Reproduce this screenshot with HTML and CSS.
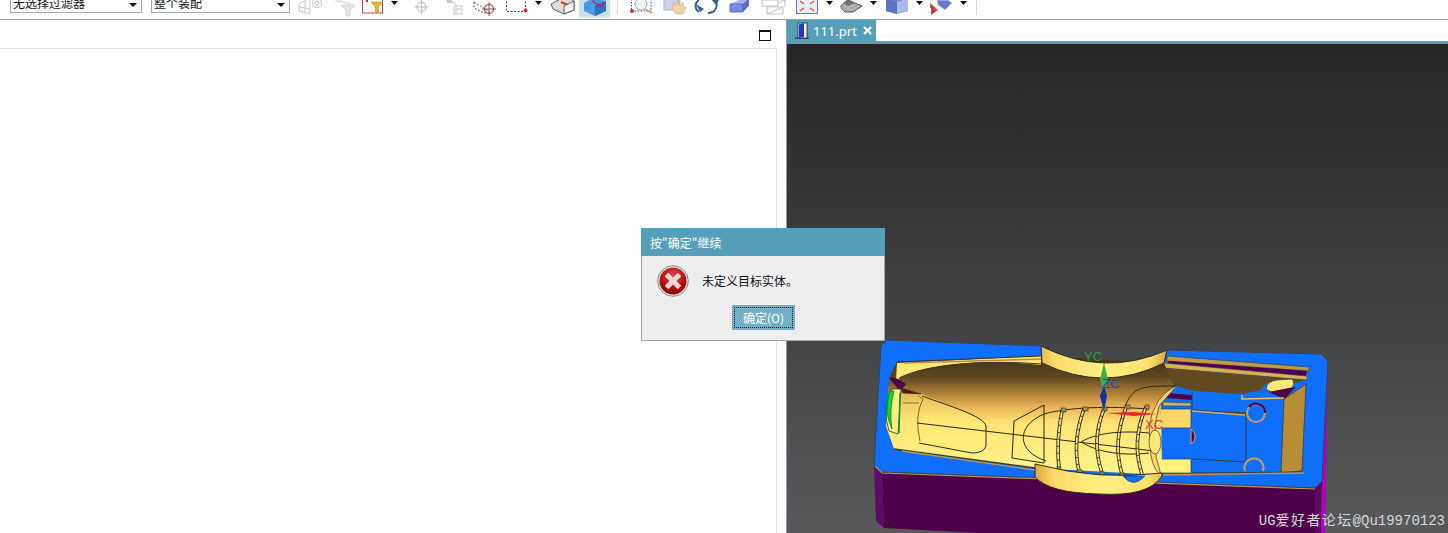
FILE: index.html
```html
<!DOCTYPE html>
<html lang="zh">
<head>
<meta charset="utf-8">
<title>UG</title>
<link rel="stylesheet" href="styles.css">
</head>
<body>
<div class="app">
  <header class="toolbar">
    <div class="combo combo-a"><span>无选择过滤器</span><i class="caret"></i></div>
    <div class="combo combo-b"><span>整个装配</span><i class="caret"></i></div>
    <svg width="38" height="19" viewBox="290 0 38 19"><g fill="none" stroke="#d2d2d2" stroke-width="1.300"><path d="M299,4 L310,-2 V14 L299,11 Z M299,7 L310,9 M305,0 V13"/><circle cx="317" cy="3" r="4.500"/><circle cx="317" cy="3" r="2"/></g></svg>
    <svg width="32" height="19" viewBox="328 0 32 19"><path d="M335,0 L351,4" stroke="#e2e2e2" stroke-width="2"/><path d="M341,5 H355 L350,10 V16 H346 V10 Z" fill="#e6e6e6" stroke="#d4d4d4"/></svg>
    <svg width="26" height="19" viewBox="360 0 26 19"><rect x="362.500" y="-3" width="20" height="16" fill="none" stroke="#c8404c"/><path d="M371,2 H383 L378.500,7 V12 H375.500 V7 Z" fill="#f0b030" stroke="#b8902c" stroke-width=".6"/><path d="M367,-1 V2" stroke="#d02020" stroke-width="2"/></svg>
    <svg width="18" height="19" viewBox="386 0 18 19"><path d="M391,1 H398 L394.500,5 Z" fill="#111"/></svg>
    <svg width="34" height="19" viewBox="404 0 34 19"><g fill="none" stroke="#c0c0c0" stroke-width="1.200"><circle cx="421.500" cy="7" r="4.500"/><path d="M421.500,0 V14 M414.500,7 H428.500"/></g></svg>
    <svg width="30" height="19" viewBox="438 0 30 19"><g fill="none" stroke="#d4d4d4" stroke-width="1.300"><path d="M450,0 L456,5 V14 M456,9 H461"/><rect x="454" y="6" width="8" height="8"/></g><rect x="447" y="-1" width="5" height="4" fill="#c8c8c8"/></svg>
    <svg width="32" height="19" viewBox="468 0 32 19"><path d="M474,2 L490,12 M474,2 V8 L484,13 H490" fill="none" stroke="#555" stroke-dasharray="2 1.500"/><circle cx="489" cy="9" r="4.500" fill="none" stroke="#e2202c" stroke-width="1.200"/><path d="M489,2 V16 M482,9 H496" stroke="#555" stroke-width=".9"/></svg>
    <svg width="30" height="19" viewBox="500 0 30 19"><path d="M506.500,-2 V11.500 H525" fill="none" stroke="#444" stroke-dasharray="2 1.500"/><path d="M525.500,-2 V9" stroke="#444" stroke-dasharray="2 1.500"/><circle cx="525.500" cy="10.500" r="2" fill="#d82c2c"/></svg>
    <svg width="16" height="19" viewBox="530 0 16 19"><path d="M535,1 H542 L538.500,5 Z" fill="#111"/></svg>
    <svg width="31" height="19" viewBox="546 0 31 19"><path d="M551,4 L566,-4 L574,1 V10 L564,14 L553,9 Z" fill="#dcdcdc" stroke="#606060"/><path d="M561,2 L568,5" stroke="#e03030" stroke-width="2.200"/><path d="M564,14 V6 L574,1 V10 Z" fill="#f4f4f4" stroke="#606060"/></svg>
    <svg width="35" height="19" viewBox="577 0 35 19"><rect x="579" y="-1" width="31" height="18.500" fill="#c8e3ea"/><path d="M584,3 L595,-3 L606,1 V11 L595,16 L584,11 Z" fill="#4a9ae4"/><path d="M595,5 V16 L606,11 V1 Z" fill="#2f6fc4"/><path d="M592,1 L601,6 L605,3" fill="none" stroke="#e02030" stroke-width="1.200"/></svg>
    <svg width="10" height="19" viewBox="612 0 10 19"><path d="M617.500,0 V15" stroke="#d4d4d4"/></svg>
    <svg width="36" height="19" viewBox="622 0 36 19"><path d="M631.500,-1 V11 H651 V-1" fill="none" stroke="#3838c8" stroke-dasharray="1.500 1.500"/><circle cx="632" cy="11" r="2" fill="#d02c2c"/><circle cx="641" cy="4" r="6" fill="#eef2f4" stroke="#9aa"/><path d="M645,9 L652,13" stroke="#c8a060" stroke-width="2"/></svg>
    <svg width="32" height="19" viewBox="658 0 32 19"><rect x="664" y="-2" width="16" height="12" fill="#ccd0e6" stroke="#b0b4cc"/><path d="M672,9 L674,2 L676,6 L678,0 L680,6 L683,2 L684,8 L686,7 L683,14 L676,14 Z" fill="#f0d4ac" stroke="#c8a880" stroke-width=".6"/></svg>
    <svg width="34" height="19" viewBox="690 0 34 19"><g fill="none" stroke="#3c5c94" stroke-width="2"><path d="M699,12 A7,7 0 0 1 699,0"/><path d="M708,13 A8,8 0 0 0 716,2"/></g><path d="M696,4 L700,12 L704,9 Z M711,-1 L716,5 L719,0 Z" fill="#3c5c94"/></svg>
    <svg width="31" height="19" viewBox="724 0 31 19"><path d="M730,4 L741,-1 H749 L743,9 L731,12 Z" fill="#a8b4ec"/><path d="M730,4 H743 V12 H730 Z" fill="#7c8ce0" stroke="#4c5ccc" stroke-width=".8"/><path d="M743,4 L749,-2 V6 L743,12 Z" fill="#5c6cd4"/></svg>
    <svg width="35" height="19" viewBox="755 0 35 19"><g fill="none" stroke="#c8c8c8" stroke-width="1.200"><rect x="762" y="0" width="16" height="6"/><path d="M767,14 V7 H783 V14 Z M767,14 L783,7 M779,3 L785,-1 V7"/></g></svg>
    <svg width="32" height="19" viewBox="790 0 32 19"><rect x="796.500" y="-2" width="21" height="15.500" fill="#e8ecf8" stroke="#6870c8"/><g stroke="#e05a30" stroke-width="1.300" fill="none"><path d="M800,1 L804,4 M814,1 L810,4 M800,11 L804,8 M814,11 L810,8"/></g></svg>
    <svg width="14" height="19" viewBox="822 0 14 19"><path d="M826,1 H833 L829.500,5 Z" fill="#111"/></svg>
    <svg width="30" height="19" viewBox="836 0 30 19"><path d="M841,6 L848,0 L862,6 L853,12 H845 L841,8 Z" fill="#b0b0b0" stroke="#505050"/><path d="M848,-1 L855,3 L848,6 L843,3 Z" fill="#707070"/></svg>
    <svg width="14" height="19" viewBox="866 0 14 19"><path d="M870,1 H877 L873.500,5 Z" fill="#111"/></svg>
    <svg width="32" height="19" viewBox="880 0 32 19"><path d="M886,-2 H908 V11 L897,14 L886,11 Z" fill="#7488cc"/><path d="M897,2 V14 L908,11 V-2 Z" fill="#a8b8e8"/><path d="M886,-2 L897,2 V14 L886,11 Z" fill="#5c74c4"/></svg>
    <svg width="14" height="19" viewBox="912 0 14 19"><path d="M916,1 H923 L919.500,5 Z" fill="#111"/></svg>
    <svg width="30" height="19" viewBox="926 0 30 19"><path d="M937,0 H948 L952,3 L945,10 L938,5 Z" fill="#6878cc" stroke="#c8ccec"/><path d="M930,3 L936,8 L930,8 Z" fill="#30b040"/><path d="M931,5 L938,10 L931,15 Z" fill="#d83838"/></svg>
    <svg width="14" height="19" viewBox="956 0 14 19"><path d="M960,1 H967 L963.500,5 Z" fill="#111"/></svg>
    <svg width="10" height="19" viewBox="970 0 10 19"><path d="M976.500,0 V15" stroke="#d4d4d4"/></svg>
  </header>

  <main class="workspace">
    <section class="panel">
      <div class="panel-head"><i class="maximize"></i></div>
      <div class="panel-body"></div>
    </section>
    <section class="graphics">
      <div class="tabs">
        <div class="tab">
          <svg class="door" width="16" height="17" viewBox="0 0 16 17"><path d="M1,16 H15" stroke="#223" /><rect x="4" y="1" width="9" height="15" fill="#f4f4f4" stroke="#223" stroke-width=".8"/><path d="M5,2.500 L10,1 V15 L5,16 Z" fill="#2438c8"/></svg>
          <span>111.prt</span>
          <svg class="close" width="9" height="9" viewBox="0 0 9 9"><path d="M1,1 L8,8 M8,1 L1,8" stroke="#fff" stroke-width="2.200"/></svg>
        </div>
      </div>
      <div class="viewport">
        <svg class="model" width="660" height="490" viewBox="788 43 660 490">
          <defs>
            <linearGradient id="cav" gradientUnits="userSpaceOnUse" x1="0" y1="360" x2="0" y2="470">
              <stop offset="0" stop-color="#4a3818"/><stop offset=".14" stop-color="#5c4620"/><stop offset=".3" stop-color="#b08238"/><stop offset=".42" stop-color="#ecb458"/><stop offset=".56" stop-color="#ffe474"/><stop offset="1" stop-color="#fff38a"/>
            </linearGradient>
            <linearGradient id="band" gradientUnits="userSpaceOnUse" x1="1036" y1="0" x2="1170" y2="0">
              <stop offset="0" stop-color="#dba640"/><stop offset=".14" stop-color="#ffd968"/><stop offset=".5" stop-color="#fff084"/><stop offset=".85" stop-color="#ffe070"/><stop offset="1" stop-color="#d0a040"/>
            </linearGradient>
          </defs>
          <!-- sides -->
          <path d="M875,464 L883,471 L885,527 L877,520 Z" fill="#5e0a68"/>
          <path d="M883,471 L1316,487 L1316,533 L1000,533 L885,527 Z" fill="#4e0049"/>
          <path d="M1316,487 L1323,480 L1322,533 L1316,533 Z" fill="#5a0a60"/>
          <path d="M1329,360 L1323,480 L1322,533 L1326,533 Z" fill="#b000c4"/>
          <!-- top face -->
          <path d="M882,345 L888,339 L1042,345 Q1105,377 1168,349 L1322,353 L1329,360 L1323,480 L1316,487 L883,471 L875,464 Z" fill="#0f6ffa" stroke="#37415a" stroke-width="1"/>
          <path d="M876,465 L883,472 L1316,488" fill="none" stroke="#c09848" stroke-width="1.200"/>
          <!-- right pocket -->
          <path d="M1168,355 L1310,366 L1310,370 L1168,360 Z" fill="#c09a48" stroke="#333"  stroke-width=".6"/>
          <path d="M1170,360 L1308,370 L1306,377 L1230,368 L1168,364 Z" fill="#4e0049"/>
          <path d="M1165,362 L1308,375 L1308,379 L1165,367 Z" fill="#d8b058" stroke="#333" stroke-width=".6"/>
          <path d="M1150,365 L1165,367 L1306,379 L1290,384 L1267,382 L1262,389 L1243,393 L1195,390 L1177,385 L1150,398 Z" fill="#614a22"/>
          <path d="M1267,388 Q1268,380 1278,379 L1293,378 Q1297,384 1292,387 L1272,391 Z" fill="#ffe878" stroke="#333" stroke-width=".7"/>
          <path d="M1270,391 L1297,386 L1285,398 Z" fill="#4e0049"/>
          <path d="M1285,398 L1307,383 L1303,470 L1282,472 Z" fill="#b98d36" stroke="#333" stroke-width=".7"/>
          <path d="M1243,394 L1243,398 L1285,397" fill="none" stroke="#e8c060" stroke-width="1.500"/>
          <path d="M1167,392 L1193,394 L1193,399 L1167,397 Z" fill="#4e0049"/>
          <path d="M1164,401 L1192,402 L1192,405 L1164,405 Z" fill="#d8b058" stroke="#333" stroke-width=".5"/>
          <path d="M1193,391 V408 M1193,409 L1247,413 V460 M1193,458 L1247,461 M1193,472 L1303,471 M1192,410 L1247,412" fill="none" stroke="#3a3a30" stroke-width="1"/>
          <path d="M1193,410 L1246,414" stroke="#d8b058" stroke-width="1.300"/>
          <path d="M1164,474 L1305,472" stroke="#c09848" stroke-width="1.300"/>
          <path d="M1160,408 H1192 V427 H1160 Z" fill="#ffd668" stroke="#333" stroke-width=".7"/>
          <path d="M1157,458 H1192 V472 H1157 Z" fill="#fff07c" stroke="#333" stroke-width=".7"/>
          <path d="M1192,428 A9,9 0 0 1 1192,443 V428 Z" fill="#4e0049" stroke="#d8b058"/>
          <circle cx="1257" cy="412" r="9" fill="#0f6ffa" stroke="#c8a048" stroke-width="2"/>
          <path d="M1250,406 A9,9 0 0 1 1266,412" fill="none" stroke="#4e0049" stroke-width="2"/>
          <path d="M1246,470 A9.500,9.500 0 1 1 1264,470" fill="#0f6ffa" stroke="#c8a048" stroke-width="2"/>
          <!-- left cavity -->
          <path d="M890,377 L898,361 L1042,355 L1165,362 L1175,385 L1162,400 L1163,474 L1036,467 L895,448 L887,425 Z" fill="url(#cav)"/>
          <path d="M898,362 L1042,355 V364 C990,358 930,362 901,377 L897,380 Z" fill="#ffe878"/>
          <path d="M898,361 L1042,355 M900,377 C930,362 990,359 1042,363" fill="none" stroke="#3a3020" stroke-width="1"/>
          <path d="M905,362 L1042,358" stroke="#b89040" stroke-width="1.500"/>
          <path d="M895,448 L1036,467" stroke="#39342a" stroke-width="1.300"/>
          <path d="M903,450 L1036,469" stroke="#c09848" stroke-width="1.300"/>
          <path d="M898,392 L923,393 C950,405 985,415 987,425 L987,445 Q985,452 973,452 L920,442 L908,442 L898,430 Z" fill="#ffec78" opacity=".55"/>
          <!-- lens -->
          <path d="M890,377 Q895,375 907,383 L901,390 Z" fill="#4e0049" stroke="#333" stroke-width=".6"/>
          <path d="M902,387 L922,393 L904,392 Z" fill="#6b0a14" stroke="#333" stroke-width=".6"/>
          <path d="M893,388 Q883,410 890,430 L899,433 L902,388 Z" fill="#fff084" stroke="#333" stroke-width=".8"/>
          <path d="M891,390 Q884,410 893,428 Q890,410 895,390 Z" fill="#10d828" stroke="#0a6010" stroke-width=".6"/>
          <path d="M901,392 L900,432" stroke="#109030" stroke-width="1.500"/>
          <path d="M904,402 H920 M920,395 L924,398 Q915,415 921,440" fill="none" stroke="#7a6830" stroke-width="1"/>
          <!-- wires -->
          <g fill="none" stroke="#2a261c" stroke-width="1">
            <path d="M923,395 C950,405 985,415 987,425 L987,445 Q985,452 973,452 L920,442"/>
            <path d="M918,422 L1155,450"/>
            <path d="M1015,420 L1045,404 V462 M1015,420 L1013,457 L1045,462"/>
            <path d="M1045,413 C1017,425 1017,450 1047,460"/>
            <path d="M1045,413 C1070,406 1110,405 1150,408"/>
            <path d="M1082,441 C1100,430 1130,430 1150,432 M1082,441 C1100,452 1125,455 1150,452"/>
            <path d="M1127,403 C1135,385 1145,385 1177,385"/>
          </g>
          <g fill="none" stroke="#2a261c" stroke-width="3.600"><path d="M1063,410 Q1057,440 1060,468"/><path d="M1085,408 Q1073,440 1080,470"/><path d="M1105,408 Q1092,440 1103,472"/><path d="M1128,404 Q1113,440 1123,473"/><path d="M1147,406 Q1132,440 1143,473"/></g>
          <g fill="none" stroke="#ffe880" stroke-width="1.800"><path d="M1063,410 Q1057,440 1060,468"/><path d="M1085,408 Q1073,440 1080,470"/><path d="M1105,408 Q1092,440 1103,472"/><path d="M1128,404 Q1113,440 1123,473"/><path d="M1147,406 Q1132,440 1143,473"/></g>
          <g fill="none" stroke="#3a3428" stroke-width="1.800" stroke-dasharray="1 6"><path d="M1063,410 Q1057,440 1060,468"/><path d="M1085,408 Q1073,440 1080,470"/><path d="M1105,408 Q1092,440 1103,472"/><path d="M1128,404 Q1113,440 1123,473"/><path d="M1147,406 Q1132,440 1143,473"/></g>
          <g fill="#b09048" stroke="#222" stroke-width=".6"><rect x="1062" y="407" width="5" height="4"/><rect x="1084" y="406" width="5" height="4"/><rect x="1103" y="406" width="5" height="4"/><rect x="1127" y="404" width="4" height="4"/><rect x="1146" y="404" width="4" height="4"/><rect x="1058" y="466" width="4" height="3"/><rect x="1078" y="469" width="5" height="3"/><rect x="1101" y="471" width="4" height="3"/><rect x="1121" y="472" width="4" height="3"/></g>
          <path d="M1177,385 Q1155,395 1150,425 L1152,455 Q1155,470 1162,474 Q1150,440 1160,405 L1175,388" fill="#ffd668" stroke="#333" stroke-width=".7"/>
          <ellipse cx="1156" cy="441" rx="6" ry="12" fill="#ffe878" stroke="#39342a" stroke-width=".7"/>
          <!-- bosses -->
          <path d="M1042,345 Q1105,377 1168,349 L1165,362 Q1105,392 1043,362 Z" fill="url(#band)" stroke="#2e2a20" stroke-width="1"/>
          <path d="M1036,463 Q1100,480 1163,472 L1163,475 Q1150,496 1100,493 Q1050,492 1036,476 Z" fill="url(#band)" stroke="#2e2a20" stroke-width="1"/>
          <path d="M1124,475 Q1134,488 1146,475 Z" fill="#0f6ffa" stroke="#333" stroke-width=".6"/>
          <!-- triad -->
          <path d="M1105,362 L1109,378 L1105,392 L1101,378 Z" fill="#3fae4a"/>
          <path d="M1105,385 L1108,395 L1105,410 L1101,395 Z" fill="#0a36a8"/>
          <path d="M1107,412 L1135,411 L1158,413 L1135,415 Z" fill="#e02c2c"/>
          <text class="axis axis-y" x="1085" y="360">YC</text>
          <text class="axis axis-z" x="1103" y="387">ZC</text>
          <text class="axis axis-x" x="1146" y="428">XC</text>
        </svg>
        <div class="watermark">UG<span class="wm-cjk">爱好者论坛</span>@Qu19970123</div>
      </div>
    </section>
  </main>

  <div class="dialog">
    <div class="dialog-title">按"确定"继续</div>
    <div class="dialog-body">
      <div class="dialog-msg">
        <svg width="32" height="32" viewBox="0 0 32 32"><defs><radialGradient id="errfill" cx=".5" cy=".3" r=".75"><stop offset="0" stop-color="#e04848"/><stop offset=".7" stop-color="#aa0808"/><stop offset="1" stop-color="#7c0606"/></radialGradient></defs><circle cx="16" cy="16" r="15.300" fill="#e4e4e4" stroke="#8c8c8c"/><circle cx="16" cy="16" r="13.500" fill="url(#errfill)"/><path d="M9.500,9.500 L22.500,22.500 M22.500,9.500 L9.500,22.500" stroke="#ecd8d8" stroke-width="5"/></svg>
        <span>未定义目标实体。</span>
      </div>
      <div class="dialog-actions"><button class="ok" type="button"><span>确定(O)</span></button></div>
    </div>
  </div>
</div>
</body>
</html>
```
FILE: styles.css
```css
* { box-sizing: border-box; }
html, body { margin: 0; padding: 0; }
body {
  width: 1448px;
  height: 533px;
  overflow: hidden;
  background: #fff;
  font-family: "Noto Sans CJK SC", "Liberation Sans", sans-serif;
  font-size: 12px;
}
.app {
  position: relative;
  display: flex;
  flex-direction: column;
  height: 533px;
}
.toolbar {
  display: flex;
  flex: none;
  align-items: flex-start;
  height: 20px;
  padding-left: 10px;
  background: #fff;
  border-bottom: 1px solid #a0a0a0;
  overflow: hidden;
}
.toolbar svg { flex: none; display: block; }
.combo {
  flex: none;
  display: flex;
  align-items: center;
  justify-content: space-between;
  height: 21px;
  margin-top: -8px;
  padding: 0 3px 0 2px;
  border: 1px solid #a8a8a8;
  color: #111;
  font-size: 12px;
  line-height: 14px;
}
.combo-a { width: 132px; margin-right: 9px; }
.combo-b { width: 139px; }
.caret {
  width: 0;
  height: 0;
  margin: 4px 1px 0 0;
  border-left: 4px solid transparent;
  border-right: 4px solid transparent;
  border-top: 4px solid #111;
}
.workspace { flex: 1; display: flex; min-height: 0; }
.panel {
  flex: none;
  display: flex;
  flex-direction: column;
  width: 786px;
  padding-right: 9px;
  background: #fff;
}
.panel-head {
  flex: none;
  display: flex;
  justify-content: flex-end;
  height: 29px;
  padding: 10px 6px 0 0;
  border-bottom: 1px solid #e2e2e2;
}
.maximize {
  width: 12px;
  height: 11px;
  border: 1px solid #111;
  border-top-width: 2px;
}
.panel-body { flex: 1; border-right: 1px solid #e2e2e2; }
.graphics {
  flex: 1;
  display: flex;
  flex-direction: column;
  min-width: 0;
  border-left: 1px solid #8d9ba2;
}
.tabs {
  flex: none;
  height: 24px;
  background: #fff;
  border-bottom: 3px solid #569fb8;
}
.tab {
  display: flex;
  align-items: center;
  width: 89px;
  height: 21px;
  padding-left: 7px;
  background: #569fb8;
  color: #fff;
  font-family: "Noto Sans", "Liberation Sans", sans-serif;
  font-size: 13px;
}
.door { margin-right: 3px; }
.close { margin-left: 6px; }
.viewport {
  position: relative;
  flex: 1;
  overflow: hidden;
  background: linear-gradient(#262627, #58595a);
}
.model { display: block; position: absolute; left: 0; top: 0; }
.axis { font-family: "Liberation Sans", sans-serif; font-size: 13px; }
.axis-y { fill: #2f9a45; }
.axis-z { fill: #1a46e0; }
.axis-x { fill: #e03838; }
.watermark {
  position: absolute;
  right: 3px;
  bottom: 3px;
  color: #d6d8dc;
  font-family: "Liberation Mono", "Noto Sans CJK SC", monospace;
  font-size: 14px;
  line-height: 18px;
  white-space: nowrap;
}
.wm-cjk { letter-spacing: 1.400px; }
.dialog {
  position: absolute;
  left: 641px;
  top: 228px;
  width: 244px;
  height: 113px;
  display: flex;
  flex-direction: column;
  background: #eeeeee;
  border: 1px solid #a4a4a4;
  border-top: 0;
}
.dialog-title {
  flex: none;
  height: 28px;
  margin: 0 -1px;
  padding: 0 0 0 9px;
  background: #569fb8;
  color: #fff;
  font-size: 12px;
  line-height: 29px;
}
.dialog-body { flex: 1; display: flex; flex-direction: column; }
.dialog-msg {
  display: flex;
  align-items: center;
  gap: 13px;
  height: 49px;
  padding-left: 15px;
  color: #111;
}
.dialog-actions { display: flex; justify-content: center; padding-left: 1px; }
.ok {
  width: 63px;
  height: 25px;
  padding: 2px;
  border: 0;
  background: #73afc6;
  color: #fff;
  font-family: inherit;
  font-size: 12px;
}
.ok span {
  display: block;
  height: 100%;
  border: 1px dotted #111;
  line-height: 19px;
}
```
